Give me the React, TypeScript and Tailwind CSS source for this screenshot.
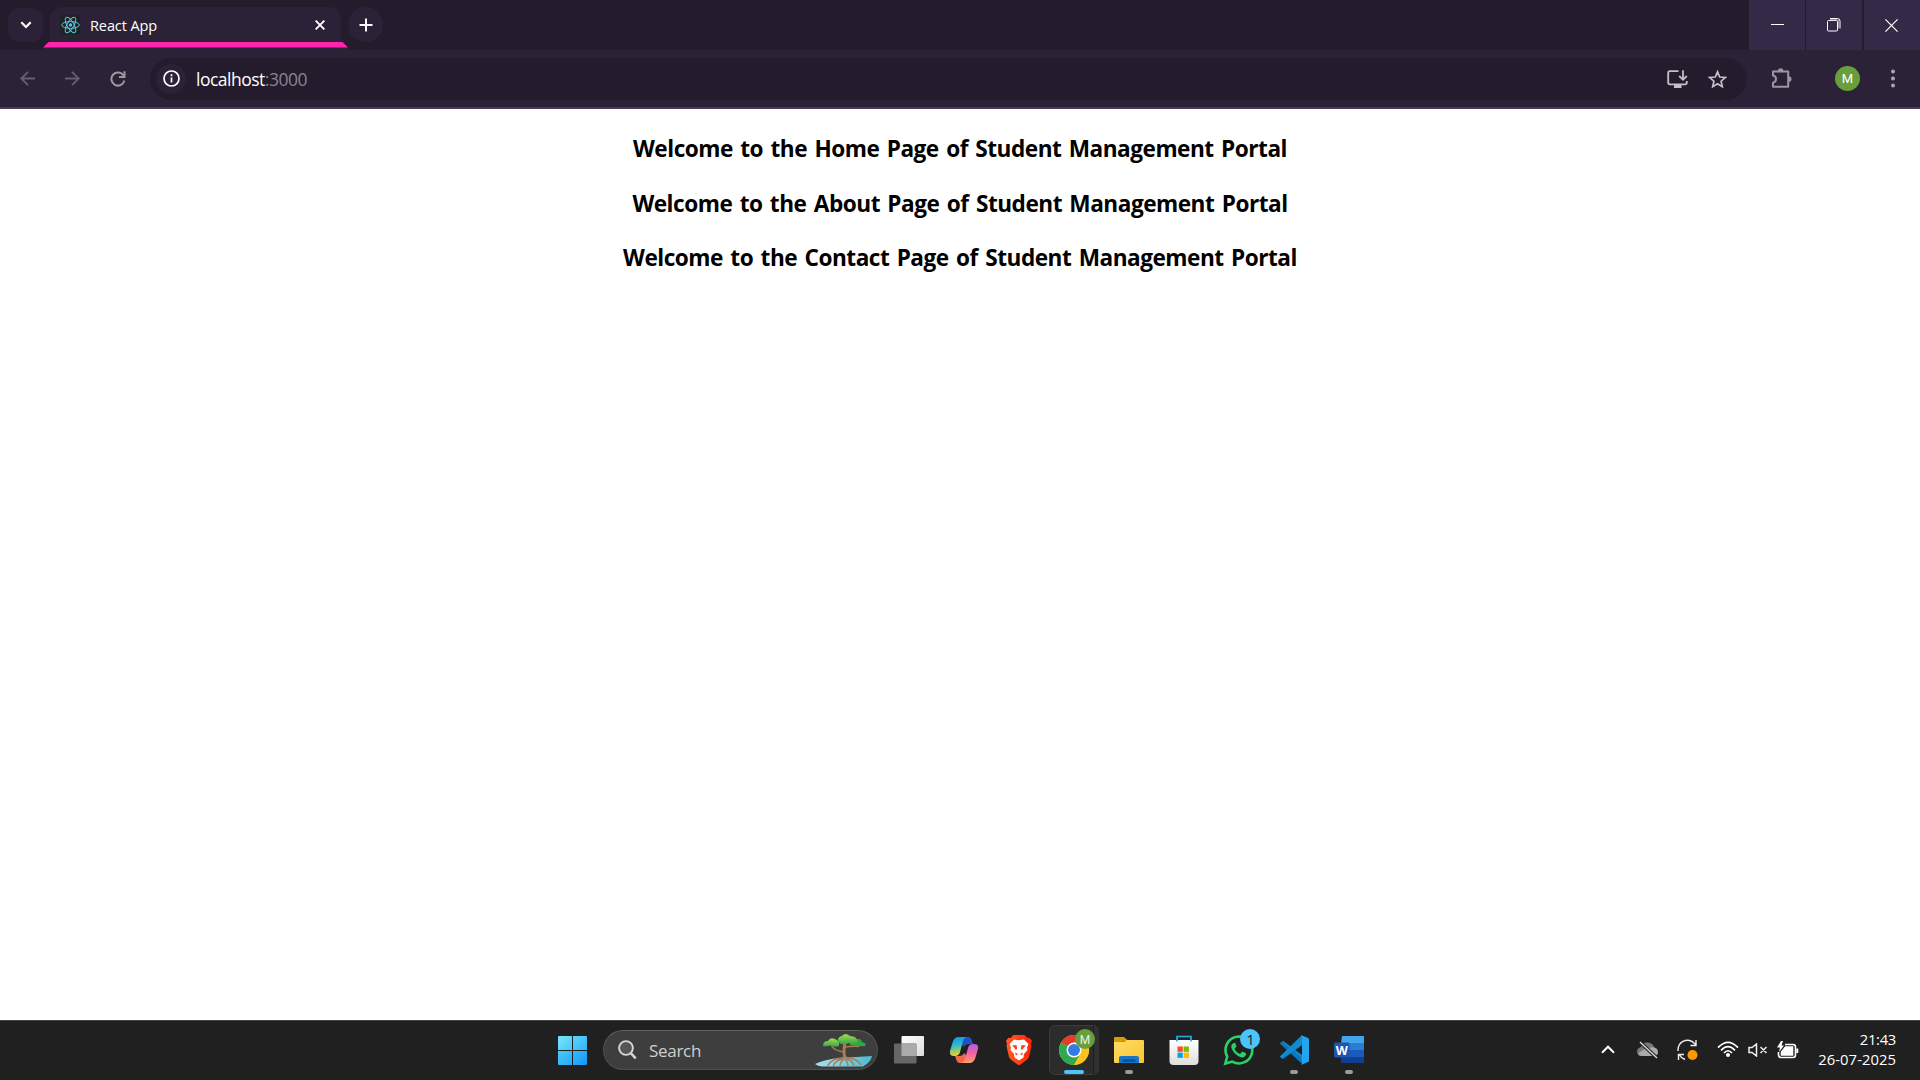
import React from "react";

const ui = "font-['Open_Sans','Noto_Sans',sans-serif]";

function WindowButton({ children, className }: { children: React.ReactNode; className: string }) {
  return <div className={`flex h-full items-center justify-center bg-[#342946] ${className}`}>{children}</div>;
}

function TabStrip() {
  return (
    <div className="flex h-[50px] items-start bg-[#241b2d]">
      <div className="mt-2 ml-2 flex h-[34px] w-[35px] items-center justify-center rounded-xl bg-[#2c2238]">
        <svg width="12" height="8" viewBox="0 0 12 8" fill="none" stroke="#fff" strokeWidth="2.2"><path d="M1.3 1.3 6 6l4.700-4.700" /></svg>
      </div>
      <div className="relative ml-[7px] h-[50px] w-[291px]">
        <svg className="absolute top-[42px] -left-[13px]" width="317" height="8" viewBox="0 0 317 8">
          <path d="M0 8Q10 7 13 0H304Q307 7 317 8Z" fill="#2c2238" />
          <path d="M11.500 0H305.500L311 5.600H6Z" fill="#ff24ab" />
        </svg>
        <div className="mt-[7px] flex h-[35px] items-center rounded-t-xl bg-[#2c2238] pl-[10px]">
          <div className="flex h-5 w-5 items-center justify-center bg-[#202124]">
            <svg width="19" height="18" viewBox="-9.500 -9 19 18" fill="none" stroke="#58c4dc" strokeWidth="1">
              <ellipse rx="8.800" ry="3.400" />
              <ellipse rx="8.800" ry="3.400" transform="rotate(60)" />
              <ellipse rx="8.800" ry="3.400" transform="rotate(120)" />
              <circle r="1.700" fill="#58c4dc" stroke="none" />
            </svg>
          </div>
          <span className="ml-[10px] pt-[2px] text-[14.5px] tracking-[-0.1px] text-white">React App</span>
          <svg className="mr-4 ml-auto" width="10" height="10" viewBox="0 0 10 10" stroke="#fff" strokeWidth="1.900"><path d="m.6.6 8.800 8.800M9.400.6.6 9.400" /></svg>
        </div>
      </div>
      <div className="mt-[7px] ml-[7px] flex h-[35px] w-[35px] items-center justify-center rounded-full bg-[#2c2238]">
        <svg width="14" height="14" viewBox="0 0 14 14" stroke="#fff" strokeWidth="2"><path d="M7 .5v13M.5 7h13" /></svg>
      </div>
      <div className="ml-auto flex h-full">
        <WindowButton className="mr-px w-[56px]"><div className="h-px w-[13px] -translate-y-[1px] bg-white" /></WindowButton>
        <WindowButton className="mr-[2px] w-[56px] pr-px">
          <svg width="14" height="14" viewBox="0 0 14 14" fill="none" stroke="#fff"><rect x=".5" y="2.500" width="10" height="10.500" rx="1" /><path d="M3 .5h7.500Q13 .5 13 3v7.500" /><path d="M3 1.700h7q1.700 0 1.700 1.700v7" stroke="#a79eb4" /></svg>
        </WindowButton>
        <WindowButton className="w-[56px] pr-[2px]">
          <svg width="13" height="13" viewBox="0 0 13 13" stroke="#fff" strokeWidth="1.200"><path d="m.4.4 12.200 12.200M12.600.4.4 12.600" /></svg>
        </WindowButton>
      </div>
    </div>
  );
}

function Toolbar() {
  return (
    <div className="flex h-[59px] items-center border-b-2 border-[#483b58] bg-[#2c2238]">
      <svg className="ml-5" width="15" height="15" viewBox="0 0 15 15" fill="none" stroke="#665e70" strokeWidth="1.800"><path d="M15 7.500H1.500M8 .8 1.300 7.500 8 14.200" /></svg>
      <svg className="ml-[30px]" width="15" height="15" viewBox="0 0 15 15" fill="none" stroke="#665e70" strokeWidth="1.800"><path d="M0 7.500h13.500M7 .8l6.700 6.700L7 14.200" /></svg>
      <svg className="ml-[29.500px]" width="16" height="16" viewBox="0 0 16 16" fill="none" stroke="#9c979f" strokeWidth="2"><path d="M13.600 4.500A6.600 6.600 0 1 0 14.400 9.600M14.500 .3V6H9" /></svg>
      <div className="ml-[24.500px] flex h-[42px] w-[1597px] items-center rounded-full bg-[#241b2d] pr-[20px] pl-[6px]">
        <div className="flex h-[30px] w-[30px] items-center justify-center rounded-full bg-[#2c2238]">
          <svg width="17" height="17" viewBox="0 0 17 17" fill="none" stroke="#fff" strokeWidth="1.700"><circle cx="8.500" cy="8.500" r="7.500" /><path d="M8.500 7.500v5M8.500 4.300v1.900" /></svg>
        </div>
        <span className="ml-[10px] pt-[2px] text-[17.5px] tracking-[-0.5px] text-white">localhost<span className="text-[#8a838f]">:3000</span></span>
        <svg className="ml-auto" width="21" height="18" viewBox="0 0 21 18" fill="none" stroke="#c4c0c7" strokeWidth="1.800">
          <path d="M11.500 1.200H3Q1.200 1.200 1.200 3v9.500q0 1.800 1.800 1.800h15q1.800 0 1.800-1.800V11" />
          <path d="M7 16.500h7.500" strokeWidth="3" />
          <path d="M16 .3v9.200M12.200 6l3.800 3.800L19.800 6" />
        </svg>
        <svg className="ml-[20px]" width="19" height="18" viewBox="0 0 19 18" fill="none" stroke="#c4c0c7" strokeWidth="1.700"><path d="m9.500 1.800 2.200 5.200 5.600.5-4.200 3.700 1.200 5.500-4.800-2.900-4.800 2.900 1.200-5.500L1.700 7.500 7.300 7Z" /></svg>
      </div>
      <svg className="ml-[24px]" width="21" height="21" viewBox="0 0 21 21">
        <path d="M2 3.500h15.200v15.200H2v-4q3-.6 3-3.600T2 7.500Z" fill="none" stroke="#9c979f" strokeWidth="2" strokeLinejoin="round" />
        <path d="M6.800 3a2.800 2.800 0 0 1 5.600 0M17.700 8.300a2.800 2.800 0 0 1 0 5.600" fill="#9c979f" />
      </svg>
      <div className="ml-[43px] flex h-[25px] w-[25px] items-center justify-center rounded-full bg-[#689f38] font-['Roboto',sans-serif] text-[13px] text-white">M</div>
      <svg className="ml-[30.500px]" width="4" height="19" viewBox="0 0 4 19" fill="#aaa5ad"><circle cx="2" cy="2.500" r="2" /><circle cx="2" cy="9.500" r="2" /><circle cx="2" cy="16.500" r="2" /></svg>
    </div>
  );
}

function Page() {
  return (
    <main className="flex h-[911px] flex-col items-center bg-white pt-[20px] text-[22.6px] leading-[40px] font-bold tracking-[-0.48px] whitespace-nowrap text-black [word-spacing:2px]">
      <h2 className="mb-[15px]">Welcome to the Home Page of Student Management Portal</h2>
      <h2 className="mb-[14px]">Welcome to the About Page of Student Management Portal</h2>
      <h2>Welcome to the Contact Page of Student Management Portal</h2>
    </main>
  );
}

function Icon({ children }: { children: React.ReactNode }) {
  return <svg className="overflow-visible" width="30" height="30" viewBox="-15 -15 30 30">{children}</svg>;
}

function TaskbarItem({ children, running, active }: { children: React.ReactNode; running?: boolean; active?: boolean }) {
  return (
    <div className="relative flex h-[59px] w-[55px] items-center justify-center">
      {active && <div className="absolute top-[4px] left-[3px] h-[50px] w-[50px] rounded-md border border-[#3c3c3c] bg-[#2c2c2c]" />}
      {active && <div className="absolute top-[4px] left-[47px] h-[50px] w-[6px] rounded-r-md border-l border-[#1e1e1e] bg-[#303030]" />}
      <div className="relative mb-px flex">{children}</div>
      {active && <div className="absolute bottom-[6px] left-[18px] h-[4px] w-5 rounded-full bg-[#4cc2ff]" />}
      {running && <div className="absolute bottom-[6px] left-[24px] h-[4px] w-2 rounded-full bg-[#9a9a9a]" />}
    </div>
  );
}

function Tree() {
  return (
    <svg className="mr-[4px] ml-auto" width="59" height="34" viewBox="0 0 59 34" fill="none">
      <defs><linearGradient id="water"><stop stopColor="#a6e3ee" /><stop offset="1" stopColor="#4fb9d3" /></linearGradient>
        <linearGradient id="leaf" x2="0" y2="1"><stop stopColor="#a5d951" /><stop offset="1" stopColor="#35a844" /></linearGradient></defs>
      <path d="M1 31Q12 26 26 25L58 23Q57 29 49 33.500H8Q4 33 1 31Z" fill="url(#water)" />
      <g stroke="#a97c50" strokeWidth="1.300">
        <path d="M29 25Q18 25 13 33.500M30 26Q22 26 19 33.500M31 26Q26 28 26 33.500M31 26Q34 29 34 33.500M32 26Q39 27 40 33.500M33 25Q43 25 47 32" />
        <path d="M30 19Q20 18 17 12M31 14Q38 13 45 13.500" strokeWidth="1.500" />
        <path d="M31 25Q29 20 31 9" strokeWidth="3" />
      </g>
      <path d="M27 26Q31 22 35 26" stroke="#a97c50" strokeWidth="1.500" />
      <path d="M9 13Q9 8 14 8Q16 4 21 6Q26 8 25 13Q20 15 17 12Q13 14 9 13Z" fill="url(#leaf)" />
      <path d="M36 12Q35 7 41 7Q47 4 48 9Q53 10 51 13Q44 14 36 12Z" fill="#2fa745" />
      <path d="M24 9Q23 4 28 3Q31-1 36 3Q43 3 44 9Q40 12 35 10Q28 13 24 9Z" fill="url(#leaf)" />
    </svg>
  );
}

function Taskbar() {
  return (
    <footer className="flex h-[60px] items-center border-t border-[#454545] bg-[#202020]">
      <div className="ml-[558px] grid h-[29px] w-[29px] grid-cols-2 gap-px overflow-hidden rounded-[1px]">
        <div className="bg-linear-to-br from-[#75e7fb] to-[#49c6fa]" /><div className="bg-linear-to-br from-[#5bd4fb] to-[#32b3fa]" />
        <div className="bg-linear-to-br from-[#4acafa] to-[#26a9fa]" /><div className="bg-linear-to-br from-[#38baf9] to-[#1295f8]" />
      </div>
      <div className="mb-px ml-4 flex h-[40px] w-[275px] items-center rounded-full border border-[#505050] border-t-[#606060] bg-[#3e3e3e]">
        <svg className="ml-[14px]" width="19" height="20" viewBox="0 0 19 20" stroke="#d6d6d6" fill="none"><circle cx="8" cy="8" r="6.900" strokeWidth="1.900" fill="#555" /><path d="m13 13.300 4.700 5" strokeWidth="2.500" /></svg>
        <span className="ml-[12px] pt-px text-[17px] tracking-[-0.3px] text-[#cfcfcf]">Search</span>
        <Tree />
      </div>
      <div className="ml-[3px] flex">
        <TaskbarItem><Icon>
          <defs><linearGradient id="tv" x2="1" y2="1"><stop stopColor="#fff" /><stop offset="1" stopColor="#dcdcdc" /></linearGradient></defs>
          <rect x="-7.500" y="-14" width="22.500" height="20" rx="1" fill="url(#tv)" /><rect x="-15" y="-6.500" width="22.500" height="20" rx="1" fill="#666" /><path d="M-7.500-6.500h15v12.500h-15Z" fill="#aaa" />
        </Icon></TaskbarItem>
        <TaskbarItem><Icon>
          <defs>
            <linearGradient id="cpA" x2=".2" y2="1"><stop stopColor="#168fe8" /><stop offset=".45" stopColor="#27bad0" /><stop offset="1" stopColor="#e8d52f" /></linearGradient>
            <linearGradient id="cpB" x2="0" y2="1"><stop stopColor="#b45ae8" /><stop offset=".5" stopColor="#f263a1" /><stop offset="1" stopColor="#ff9e64" /></linearGradient>
          </defs>
          <path d="M-1-13H4Q7-13 8-9L9-6H5Q1-6 0-3L-3-6Z" fill="#2051ca" />
          <path d="M1 13H-4Q-7 13-8 9L-9 6H-5Q-1 6 0 3L3 6Z" fill="#ef6948" />
          <path d="M-6-13H4Q0-13-1-9L-4 2Q-5 6-9 6H-10Q-15 6-14 1L-11-9Q-9-13-6-13Z" fill="url(#cpA)" />
          <path d="M6 13H-4Q0 13 1 9L4-2Q5-6 9-6H10Q15-6 14-1L11 9Q9 13 6 13Z" fill="url(#cpB)" />
        </Icon></TaskbarItem>
        <TaskbarItem><Icon>
          <defs><linearGradient id="br"><stop stopColor="#ff5a27" /><stop offset="1" stopColor="#ff2108" /></linearGradient></defs>
          <path d="M-5.500-15h11l3 3 2-.3 2.500 3-1 3.300.5 2L10 7Q9 9 7 10.500L1.500 14.500Q0 15.500-1.500 14.500L-7 10.500Q-9 9-10 7L-12.500-4l.5-2-1-3.300 2.500-3 2 .3Z" fill="url(#br)" />
          <path d="M-5-10.500 0-9.700 5-10.500 9.500-6 8-2.500 8.500 0 5 4 4.500 7.500 0 10.500-4.500 7.500-5 4-8.500 0-8-2.500-9.500-6Z" fill="#fff" />
          <path d="M-7-4.500-2.500-5-1.800-1.500-3 0-5-2.500ZM7-4.500 2.500-5 1.800-1.500 3 0 5-2.500ZM-4 2.500-1 4-3 5.500ZM4 2.500 1 4 3 5.500Z" fill="#ff4020" />
        </Icon></TaskbarItem>
        <TaskbarItem active><Icon>
          <circle r="15" fill="#fcc31e" />
          <path d="M0 0-13-7.500A15 15 0 0 1 13-7.500H0Z" fill="#e33b2e" /><path d="M-13-7.500A15 15 0 0 0 0 15L6.500 3.700 0 0Z" fill="#2da94f" /><path d="M0-7.500H13A15 15 0 0 1 0 15L6.500 3.700Z" fill="#fcc31e" />
          <circle r="7.500" fill="#fff" /><circle r="6" fill="#347be8" />
          <circle cx="11" cy="-11" r="10" fill="#689f38" /><text x="11" y="-6.500" textAnchor="middle" fill="#e9f1e2" fontFamily="Roboto, sans-serif" fontSize="12">M</text>
        </Icon></TaskbarItem>
        <TaskbarItem running><Icon>
          <defs><linearGradient id="fd" x2="1" y2="1"><stop stopColor="#ffdc68" /><stop offset="1" stopColor="#fac42d" /></linearGradient></defs>
          <path d="M-15-7V-12Q-15-13-14-13H-6Q-4-13-3-11L0-9Z" fill="#dc9b05" /><path d="M-15-8H-5L-2-10H14Q15-10 15-9V12Q15 13 14 13H-14Q-15 13-15 12Z" fill="url(#fd)" />
          <path d="M-10 13V8Q-10 6-8 6H8Q10 6 10 8V13Z" fill="#1675c7" /><path d="M-6 9.300H6Q7 10.600 6 12H-6Q-7 10.600-6 9.300Z" fill="#0b56a2" />
        </Icon></TaskbarItem>
        <TaskbarItem><Icon>
          <defs><linearGradient id="st" x2="0" y2="1"><stop stopColor="#fff" /><stop offset="1" stopColor="#dedede" /></linearGradient></defs>
          <path d="M-14.500-10h29V11q0 4-4 4h-21q-4 0-4-4Z" fill="url(#st)" /><path d="M-7-8.500V-13.500H7v5" fill="none" stroke="#24aeea" strokeWidth="1.700" />
          <path d="M-6.500-3.500h5.300v5.300h-5.300Z" fill="#f25022" /><path d="M-.4-3.500h5.300v5.300H-.4Z" fill="#7fba00" /><path d="M-6.500 2.600h5.300v5.300h-5.300Z" fill="#00a4ef" /><path d="M-.4 2.600h5.300v5.300H-.4Z" fill="#ffb900" />
        </Icon></TaskbarItem>
        <TaskbarItem><Icon>
          <path d="M-11.800 6.500A13.400 13.400 0 1 1-6.800 11.600L-13.700 13.600Z" fill="none" stroke="#25d366" strokeWidth="2.600" />
          <path d="M-4.600-7.200Q-8-6-7.700-2.500Q-6 3 0 6.600Q5 9 7.300 4.500L7 3.200 3.400 1.400 1 4Q-3 2.300-4.500-1.100L-2.500-3.700-3.800-7Z" fill="#25d366" />
          <circle cx="11" cy="-11" r="10" fill="#4cc2ff" /><text x="11.500" y="-5.500" textAnchor="middle" fill="#202020" fontFamily="Open Sans, sans-serif" fontSize="15">1</text>
        </Icon></TaskbarItem>
        <TaskbarItem running><Icon>
          <path d="M-14-6.500-12-8.500Q-11-9-10-8.500L8 5V13Z" fill="#1687cc" /><path d="M-14 6.500-12 8.500Q-11 9-10 8.500L8-5V-13Z" fill="#0875b8" /><path d="M7-15 14-12Q15-11.500 15-10.500V10.500Q15 11.500 14 12L7 15Q8 14 8 12V-12Q8-14 7-15Z" fill="#24a4ee" /><path d="M-14-6.500-12-8.500 7 7V13Z" fill="#0878bc" /><path d="M-14 6.500-12 8.500 8-5V-15Z" fill="#118ad2" />
        </Icon></TaskbarItem>
        <TaskbarItem running><Icon>
          <path d="M-7-14H15V-7H-8Z" fill="#41a5ee" /><path d="M-8-7H15V0H-8Z" fill="#2b7cd3" /><path d="M-8 0H15V7H-8Z" fill="#185abd" /><path d="M-8 7H15V12Q15 13 14 13H-7Q-8 13-8 12Z" fill="#103f91" />
          <rect x="-15" y="-7.500" width="15.500" height="15" rx="1.500" fill="#1c55b4" /><text x="-7.200" y="4.500" textAnchor="middle" fill="#fff" fontFamily="Open Sans, sans-serif" fontWeight="700" fontSize="12.500">W</text>
        </Icon></TaskbarItem>
      </div>
      <div className="ml-auto flex items-center pb-[2px]">
        <svg width="14" height="9" viewBox="0 0 14 9" fill="none" stroke="#fff" strokeWidth="2"><path d="m1 7.700 6-6 6 6" /></svg>
        <svg className="ml-[22px]" width="22" height="18" viewBox="0 0 22 18"><path d="M4 6Q5 1 11 1.500 16 2 17 6L10 15H5Q0 15 0 10.500 0 7 4 6Z" fill="#777" /><path d="M5 15Q1 15 2 11.500L8 8 16 6Q21 7 21 11 21 15 17 15Z" fill="#aaa" /><path d="m3 1 17 16" stroke="#202020" strokeWidth="3.500" /><path d="m3 1 17 16" stroke="#ddd" strokeWidth="1.300" /></svg>
        <svg className="ml-[18px]" width="22" height="22" viewBox="0 0 22 22" fill="none" stroke="#eee" strokeWidth="1.400"><path d="M1 12Q.6 5 6 2.300 13-.7 18.500 5.500M19 1v5.500h-5.500M8 20.500Q4 19 2.500 16M1.500 21v-5.500H7" /><circle cx="15.500" cy="16" r="5" fill="#ff9800" stroke="none" /></svg>
        <svg className="ml-[18px]" width="22" height="17" viewBox="0 0 22 17" fill="none" stroke="#fff" strokeWidth="1.700"><path d="M1 6.700Q11-4 21 6.700M4 9.400Q11 2 18 9.400M7 12Q11 7.500 15 12" /><circle cx="11" cy="14" r="2" fill="#fff" stroke="none" /></svg>
        <svg className="ml-[9px]" width="20" height="14" viewBox="0 0 20 14" fill="none" stroke="#eee" strokeWidth="1.500"><path d="M1 4.500h3L8.500 1v12L4 9.500H1ZM12.500 4l6 6M18.500 4l-6 6" /></svg>
        <svg className="ml-[9px]" width="22" height="18" viewBox="0 0 22 18" fill="none" stroke="#fff" strokeWidth="1.600"><path d="M8 3.500h8Q18.500 3.500 18.500 6v8Q18.500 16.500 16 16.500H4Q1.500 16.500 1.500 14V11" /><path d="M8.500 6H15.500V14H4.500V11Z" fill="#fff" /><path d="M20.300 7.500v4.500" strokeWidth="2" /><path d="M4 0 0 6.500H3L2 11 7 4.500H4.500L6 0Z" fill="#fff" stroke="none" /></svg>
        <div className="mr-6 w-[97px] pb-[2px] text-right text-[14.8px] leading-5 tracking-[0.05px] whitespace-nowrap text-white"><div className="tracking-[-0.3px]">21:43</div><div>26-07-2025</div></div>
      </div>
    </footer>
  );
}

export default function App() {
  return (
    <div className={`h-[1080px] w-[1920px] overflow-hidden ${ui}`}>
      <TabStrip />
      <Toolbar />
      <Page />
      <Taskbar />
    </div>
  );
}
